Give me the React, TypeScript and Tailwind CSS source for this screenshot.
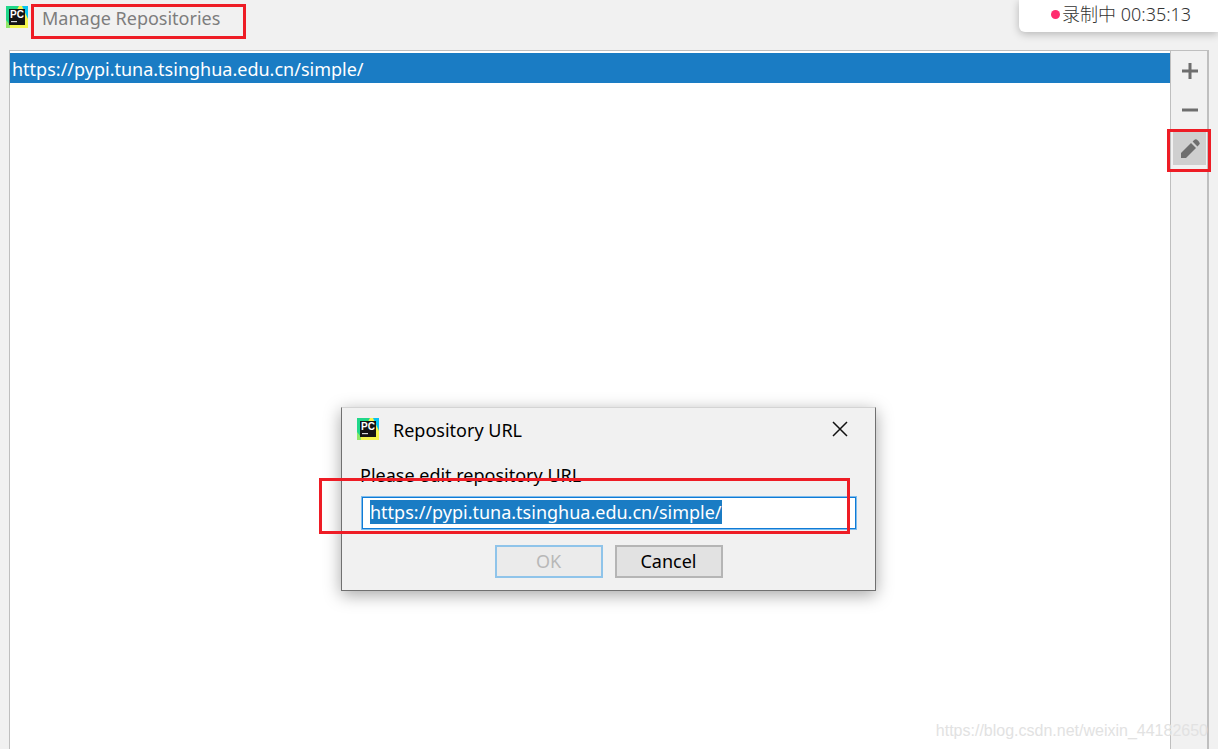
import { useEffect, useRef } from "react";

const REPO_URL = "https://pypi.tuna.tsinghua.edu.cn/simple/";

function PyCharmIcon() {
  return (
    <svg viewBox="0 0 22 22" className="size-[22px] shrink-0" aria-hidden="true">
      <path d="M0 0h22v22H0z" fill="#21d789" />
      <path d="M16 0h6v13l-6-6z" fill="#07c3f2" />
      <path d="M13 0h3l6 13v9H4l-1-4z" fill="#f4f54c" />
      <path d="M0 14l4 5v3H0z" fill="#8fe768" />
      <rect x="3" y="3" width="16" height="16" fill="#141414" />
      <text
        x="4"
        y="12"
        fontSize="10"
        fontWeight="700"
        fill="#fff"
        className="font-['Liberation_Sans',sans-serif]"
      >
        PC
      </text>
      <path d="M5 15.6h6" stroke="#d8d8d8" strokeWidth="1.2" />
    </svg>
  );
}

function Toolbar() {
  const button = "flex size-[33px] items-center justify-center pl-0.5 text-[#6e6e6e]";

  return (
    <div className="flex w-[39px] shrink-0 flex-col items-center gap-1.5 border-r-2 border-l border-[#bfbfbf] pt-[3px]">
      <button type="button" aria-label="Add" className={button}>
        <svg viewBox="0 0 16 16" className="size-4">
          <path d="M8 0v16M0 8h16" stroke="currentColor" strokeWidth="3" />
        </svg>
      </button>
      <button type="button" aria-label="Remove" className={button}>
        <svg viewBox="0 0 16 16" className="size-4">
          <path d="M0 8h16" stroke="currentColor" strokeWidth="3" />
        </svg>
      </button>
      <button type="button" aria-label="Edit" className={`${button} bg-[#cfcfcf]`}>
        <svg viewBox="0 0 20 20" className="size-5" fill="currentColor">
          <path d="M1 14L11 4l5 5L6 19H1z" />
          <path d="M12.6 2.6L14 1.2a2.6 2.6 0 0 1 3.6 0l1.2 1.2a2.6 2.6 0 0 1 0 3.6l-1.4 1.4z" />
        </svg>
      </button>
    </div>
  );
}

function RepositoryDialog() {
  const input = useRef<HTMLInputElement>(null);

  useEffect(() => {
    input.current?.focus();
    input.current?.select();
  }, []);

  return (
    <div
      role="dialog"
      aria-labelledby="dialog-title"
      className="absolute top-[407px] left-[341px] w-[535px] border border-[#707070] border-t-[#d4d4d4] bg-[#f1f1f1] pb-3 text-black shadow-[0_4px_16px_rgba(0,0,0,0.35)]"
    >
      <div className="flex h-[42px] items-center pr-[27px] pl-[15px]">
        <PyCharmIcon />
        <h2 id="dialog-title" className="ml-3.5 flex-1 pt-0.5">
          Repository URL
        </h2>
        <button type="button" aria-label="Close">
          <svg viewBox="0 0 16 16" className="size-4">
            <path d="M1 1l14 14M15 1L1 15" stroke="#111" strokeWidth="1.5" />
          </svg>
        </button>
      </div>
      <form className="px-[18px]">
        <label htmlFor="repo-url" className="block pt-[13px] pb-[9px]">
          Please edit repository URL
        </label>
        <div className="ml-px border border-[#7fbcec]">
          <input
            id="repo-url"
            ref={input}
            type="text"
            spellCheck={false}
            defaultValue={REPO_URL}
            className="block h-8 w-full border border-[#0f7bd6] bg-white px-[7px] pb-0.5 leading-[26px] outline-none selection:bg-[#1a7cc4] selection:text-white"
          />
        </div>
        <div className="mt-[15px] flex justify-center gap-3">
          <button
            type="submit"
            disabled
            className="h-[33px] w-[108px] border-2 border-[#8fc4ea] bg-[#ebebeb] pb-0.5 leading-none text-[#b8b8b8]"
          >
            OK
          </button>
          <button
            type="button"
            className="h-[33px] w-[108px] border-2 border-[#b5b5b5] bg-[#e2e2e2] pb-0.5 leading-none"
          >
            Cancel
          </button>
        </div>
      </form>
    </div>
  );
}

function App() {
  return (
    <div className="relative flex h-screen flex-col overflow-hidden bg-[#f1f1f1] font-['Noto_Sans','Noto_Sans_CJK_SC',sans-serif] text-[18px] leading-6">
      <header className="flex h-[50px] shrink-0 items-start pt-1.5 pl-1.5">
        <PyCharmIcon />
        <h1 className="ml-3.5 text-[#7d7d7d]">Manage Repositories</h1>
      </header>

      <main className="mx-[9px] flex flex-1 border-t border-[#bfbfbf]">
        <ul className="flex-1 border-l border-[#bfbfbf] bg-white pt-0.5">
          <li className="h-[30px] bg-[#1a7cc4] pl-0.5 leading-8 text-white">
            {REPO_URL}
          </li>
        </ul>
        <Toolbar />
      </main>

      <div className="absolute top-0 right-0 flex h-8 w-[199px] items-center rounded-bl-md bg-white pb-1 pl-8 font-light text-[#333] shadow-[0_2px_8px_rgba(0,0,0,0.25)]">
        <span className="mr-0.5 size-[9px] rounded-full bg-[#ff2d6f]" />
        <span>录制中 00:35:13</span>
      </div>

      <RepositoryDialog />

      <div className="pointer-events-none absolute top-1 left-[31px] h-[35px] w-[215px] border-3 border-[#ee1c25]" />
      <div className="pointer-events-none absolute top-[129px] right-[7px] h-[43px] w-11 border-3 border-[#ee1c25]" />
      <div className="pointer-events-none absolute top-[478px] left-[319px] h-14 w-[531px] border-3 border-[#ee1c25]" />

      <p className="pointer-events-none absolute right-2.5 bottom-1.5 font-['Liberation_Sans',sans-serif] text-base text-[#e2e2e2]">
        https://blog.csdn.net/weixin_44182650
      </p>
    </div>
  );
}

export default App;
